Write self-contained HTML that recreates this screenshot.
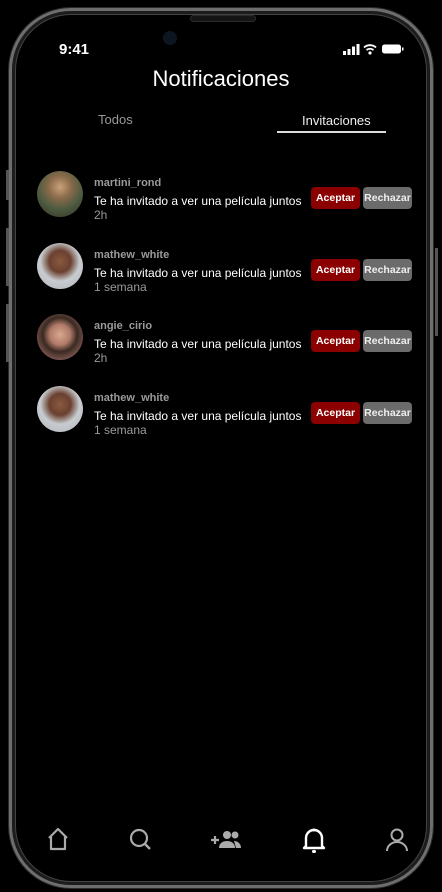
<!DOCTYPE html>
<html><head><meta charset="utf-8"><style>
*{margin:0;padding:0;box-sizing:border-box}
body{width:442px;height:892px;background:#000;position:relative;overflow:hidden;font-family:"Liberation Sans",sans-serif;color:#fff}
.frame{position:absolute;left:9px;top:8px;width:424px;height:880px;border-radius:62px;border:3px solid #6e6e6e;box-shadow:inset 0 0 0 3px #1c1c1c, 0 0 0 1px #2a2a2a}
.inner{position:absolute;left:15px;top:14px;width:412px;height:868px;border-radius:56px;border:1px solid #444}
.speaker{position:absolute;left:190px;top:15px;width:66px;height:7px;border-radius:4px;background:#151515;border:1px solid #2a2a2a}
.cam{position:absolute;left:163px;top:31px;width:14px;height:14px;border-radius:50%;background:#0d1520}
.btnside{position:absolute;background:#555;width:3px}
.time{position:absolute;left:59px;top:41px;font-size:15px;font-weight:bold}
.title{position:absolute;left:0;width:100%;top:66px;text-align:center;font-size:22px}
.tab1{position:absolute;left:98px;top:112px;font-size:13px;color:#999}
.tab2{position:absolute;left:302px;top:113px;font-size:13px;color:#eee}
.uline{position:absolute;left:277px;top:131px;width:109px;height:2px;background:#ddd}
.row{position:absolute;left:37px;width:380px;height:46px}
.av{position:absolute;left:0;top:0;width:46px;height:46px;border-radius:50%}
.name{position:absolute;left:57px;top:6px;font-size:11px;font-weight:bold;color:#9a9a9a}
.msg{position:absolute;left:57px;top:23px;font-size:12px;color:#fff}
.ago{position:absolute;left:57px;top:37px;font-size:12px;color:#9a9a9a}
.b{position:absolute;top:16px;height:22px;border-radius:4px;font-size:10.5px;font-weight:bold;line-height:22px;text-align:center;width:49px}
.acc{left:274px;background:#8b0000}
.rej{left:326px;background:#6b6b6b;color:#eee}
.nav svg{position:absolute;top:826px}
</style></head><body>
<div class="frame"></div><div class="inner"></div>
<div class="btnside" style="left:6px;top:170px;height:30px"></div>
<div class="btnside" style="left:6px;top:228px;height:58px"></div>
<div class="btnside" style="left:6px;top:304px;height:58px"></div>
<div class="btnside" style="left:435px;top:248px;height:88px"></div>
<div class="speaker"></div><div class="cam"></div>
<div class="time">9:41</div>
<svg style="position:absolute;left:342px;top:43px" width="62" height="12" viewBox="0 0 62 12">
<rect x="1" y="8" width="3" height="4" fill="#fff"/><rect x="5.5" y="6" width="3" height="6" fill="#fff"/><rect x="10" y="3.5" width="3" height="8.5" fill="#fff"/><rect x="14.5" y="1" width="3" height="11" fill="#fff"/>
<path d="M22 4.5a9 9 0 0 1 12 0M24.5 7a5.5 5.5 0 0 1 7 0" stroke="#fff" stroke-width="1.8" fill="none"/><circle cx="28" cy="10" r="1.6" fill="#fff"/>
<rect x="40" y="1.5" width="19" height="9" rx="2.5" fill="#fff"/><rect x="60" y="4.5" width="1.5" height="3" fill="#fff"/>
</svg>
<div class="title">Notificaciones</div>
<div class="tab1">Todos</div><div class="tab2">Invitaciones</div><div class="uline"></div>

<div class="row" style="top:171px"><div class="av" style="background:radial-gradient(circle at 50% 35%,#c9a27a 0,#8a6a4a 30%,#4a5a40 60%,#3a3020 100%)"></div><div class="name">martini_rond</div><div class="msg">Te ha invitado a ver una película juntos</div><div class="ago">2h</div><div class="b acc">Aceptar</div><div class="b rej">Rechazar</div></div>
<div class="row" style="top:243px"><div class="av" style="background:radial-gradient(circle at 50% 40%,#8a5a40 0,#6a4030 30%,#c8ccd0 55%,#b0b4b8 100%)"></div><div class="name">mathew_white</div><div class="msg">Te ha invitado a ver una película juntos</div><div class="ago">1 semana</div><div class="b acc">Aceptar</div><div class="b rej">Rechazar</div></div>
<div class="row" style="top:314px"><div class="av" style="background:radial-gradient(circle at 50% 45%,#d8a890 0,#b07a68 30%,#3a2a22 50%,#c08080 100%)"></div><div class="name">angie_cirio</div><div class="msg">Te ha invitado a ver una película juntos</div><div class="ago">2h</div><div class="b acc">Aceptar</div><div class="b rej">Rechazar</div></div>
<div class="row" style="top:386px"><div class="av" style="background:radial-gradient(circle at 50% 40%,#8a5a40 0,#6a4030 30%,#c8ccd0 55%,#b0b4b8 100%)"></div><div class="name">mathew_white</div><div class="msg">Te ha invitado a ver una película juntos</div><div class="ago">1 semana</div><div class="b acc">Aceptar</div><div class="b rej">Rechazar</div></div>

<div class="nav">
<svg style="left:45px" width="26" height="26" viewBox="0 0 26 26"><path d="M4 12L13 3L22 12M6 10V23H20V10" stroke="#aaa" stroke-width="2.2" fill="none" stroke-linejoin="round"/></svg>
<svg style="left:128px" width="26" height="26" viewBox="0 0 26 26"><circle cx="11" cy="12" r="8" stroke="#aaa" stroke-width="2.2" fill="none"/><path d="M17 18L22 23" stroke="#aaa" stroke-width="2.4"/></svg>
<svg style="left:210px" width="34" height="26" viewBox="0 0 34 26"><path d="M1 14H9M5 10V18" stroke="#aaa" stroke-width="2.2"/><circle cx="17" cy="9" r="4" fill="#aaa"/><circle cx="25" cy="9" r="3.5" fill="#aaa"/><path d="M9 22c0-5 4-7 8-7s8 2 8 7z" fill="#aaa"/><path d="M24 15c3 0 7 2 7 7h-5" fill="#aaa"/></svg>
<svg style="left:301px" width="26" height="28" viewBox="0 0 26 28"><path d="M5 20V12a8 8 0 0 1 16 0V20L23 22H3Z" stroke="#fff" stroke-width="2.4" fill="none" stroke-linejoin="round"/><circle cx="13" cy="4" r="1.5" fill="#fff"/><rect x="11" y="24" width="4" height="3" rx="1.5" fill="#fff"/></svg>
<svg style="left:384px" width="26" height="28" viewBox="0 0 26 28"><circle cx="13" cy="9" r="5.5" stroke="#aaa" stroke-width="2" fill="none"/><path d="M3 25a10 9 0 0 1 20 0" stroke="#aaa" stroke-width="2" fill="none"/></svg>
</div>
</body></html>
